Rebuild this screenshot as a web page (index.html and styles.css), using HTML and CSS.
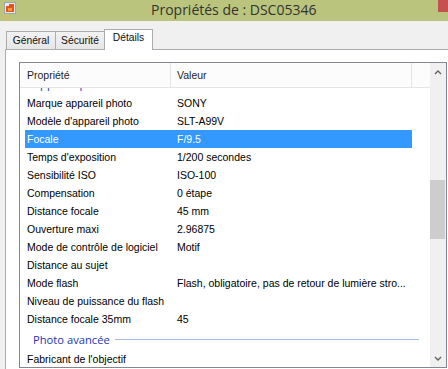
FILE: index.html
```html
<!DOCTYPE html>
<html lang="fr">
<head>
    <meta charset="UTF-8">
    <title>Propriétés de : DSC05346</title>
    <link rel="stylesheet" href="styles.css">
</head>
<body>
    <div class="titlebar">
        <svg class="app-icon" width="14" height="19" viewBox="0 0 14 19">
            <rect x="1.5" y="1.5" width="11" height="11" fill="#e4eaee" stroke="#9aa6b0"/>
            <path d="M3 5h3V3h5v8H3z" fill="#e5541b"/>
            <path d="M5 7h4v3H5z" fill="#f39a3c"/>
            <path d="M0.5 13.5q1.5 4 6 5" stroke="#f2b84a" stroke-width="1.2" fill="none"/>
        </svg>
        <div class="title">Propriétés de : DSC05346</div>
        <div class="close"></div>
    </div>

    <div class="tabs">
        <div class="tab tab-first">Général</div>
        <div class="tab">Sécurité</div>
        <div class="tab tab-active">Détails</div>
    </div>

    <div class="panel">
        <div class="listbox">
            <div class="list-main">
                <div class="list-header">
                    <div class="hcell hcell-name">Propriété</div>
                    <div class="hcell hcell-value">Valeur</div>
                </div>
                <div class="list-body">
                    <div class="list-content">
                        <div class="group"><span>Appareil photo</span><div class="group-line"></div></div>
                        <div class="row"><div class="cell-name">Marque appareil photo</div><div class="cell-value">SONY</div></div>
                        <div class="row"><div class="cell-name">Modèle d'appareil photo</div><div class="cell-value">SLT-A99V</div></div>
                        <div class="row row-selected"><div class="cell-name">Focale</div><div class="cell-value">F/9.5</div></div>
                        <div class="row"><div class="cell-name">Temps d'exposition</div><div class="cell-value">1/200 secondes</div></div>
                        <div class="row"><div class="cell-name">Sensibilité ISO</div><div class="cell-value">ISO-100</div></div>
                        <div class="row"><div class="cell-name">Compensation</div><div class="cell-value">0 étape</div></div>
                        <div class="row"><div class="cell-name">Distance focale</div><div class="cell-value">45 mm</div></div>
                        <div class="row"><div class="cell-name">Ouverture maxi</div><div class="cell-value">2.96875</div></div>
                        <div class="row"><div class="cell-name">Mode de contrôle de logiciel</div><div class="cell-value">Motif</div></div>
                        <div class="row"><div class="cell-name">Distance au sujet</div><div class="cell-value"></div></div>
                        <div class="row"><div class="cell-name">Mode flash</div><div class="cell-value">Flash, obligatoire, pas de retour de lumière stro...</div></div>
                        <div class="row"><div class="cell-name">Niveau de puissance du flash</div><div class="cell-value"></div></div>
                        <div class="row"><div class="cell-name">Distance focale 35mm</div><div class="cell-value">45</div></div>
                        <div class="group"><span>Photo avancée</span><div class="group-line"></div></div>
                        <div class="row"><div class="cell-name">Fabricant de l'objectif</div><div class="cell-value"></div></div>
                    </div>
                </div>
            </div>
            <div class="scrollbar">
                <div class="sb-button">
                    <svg width="8" height="6" viewBox="0 0 8 6"><polyline points="1,5 4,2 7,5" fill="none" stroke="#606060" stroke-width="1.3"/></svg>
                </div>
                <div class="sb-thumb"></div>
                <div class="sb-track"></div>
                <div class="sb-button">
                    <svg width="8" height="6" viewBox="0 0 8 6"><polyline points="1,1 4,4 7,1" fill="none" stroke="#606060" stroke-width="1.3"/></svg>
                </div>
            </div>
        </div>
    </div>
</body>
</html>
```

FILE: styles.css
```css
body {
    margin: 0;
    width: 448px;
    height: 369px;
    overflow: hidden;
    display: flex;
    flex-direction: column;
    background-color: #f0f0f0;
    font-family: "Liberation Sans", Arial, sans-serif;
    font-size: 10.5px;
    color: #000;
}

.titlebar {
    height: 21px;
    flex-shrink: 0;
    background-color: #bac47c;
    display: flex;
    align-items: flex-start;
}

.app-icon {
    margin: 1px 0 0 3px;
}

.title {
    margin-left: 134px;
    font-family: "Open Sans", sans-serif;
    font-size: 14px;
    line-height: 19px;
    color: #333;
}

.close {
    margin-left: auto;
    width: 10px;
    height: 12px;
    background-color: #c75050;
}

.tabs {
    height: 28px;
    flex-shrink: 0;
    display: flex;
    align-items: flex-end;
    padding-left: 6px;
}

.tab {
    height: 18px;
    box-sizing: border-box;
    width: 49px;
    border: 1px solid #acacac;
    border-left: none;
    border-bottom: none;
    background: linear-gradient(#f2f2f2, #e6e6e6);
    text-align: center;
    line-height: 17px;
    font-size: 10.3px;
    color: #111;
}

.tab-first {
    width: 50px;
    border-left: 1px solid #acacac;
}

.tab-active {
    position: relative;
    z-index: 1;
    height: 21px;
    margin-bottom: -1px;
    margin-left: -1px;
    border-left: 1px solid #acacac;
    background: #fff;
    line-height: 16px;
    width: 49px;
}

.panel {
    flex: 1;
    min-height: 0;
    overflow: hidden;
    margin-left: 5px;
    background-color: #fff;
    border-top: 1px solid #acacac;
    border-left: 1px solid #acacac;
    padding: 12px 0 0 13px;
}

.listbox {
    width: 428px;
    height: 306px;
    box-sizing: border-box;
    border: 1px solid #828790;
    display: flex;
}

.list-main {
    width: 410px;
    display: flex;
    flex-direction: column;
}

.list-header {
    height: 24px;
    flex-shrink: 0;
    display: flex;
    background-color: #fcfcfc;
    border-bottom: 1px solid #e5e5e5;
    line-height: 24px;
    color: #1e1e1e;
}

.hcell {
    box-sizing: border-box;
    border-right: 1px solid #e5e5e5;
}

.hcell-name {
    width: 151px;
    padding-left: 7px;
}

.hcell-value {
    width: 241px;
    padding-left: 6px;
}

.list-body {
    flex: 1;
    overflow: hidden;
}

.list-content {
    margin-top: -16px;
}

.row {
    margin-left: 5px;
    width: 387px;
    height: 18px;
    line-height: 18px;
    display: flex;
    white-space: nowrap;
}

.row-selected {
    background-color: #3399ff;
    color: #fff;
}

.cell-name {
    width: 145px;
    box-sizing: border-box;
    padding-left: 2px;
}

.cell-value {
    flex: 1;
    padding-left: 7px;
    overflow: hidden;
}

.group {
    margin-left: 5px;
    width: 394px;
    height: 22px;
    box-sizing: border-box;
    padding-left: 8px;
    display: flex;
    align-items: center;
    font-family: "Open Sans", sans-serif;
    font-size: 11.2px;
    color: #2236b0;
}

.group-line {
    flex: 1;
    height: 1px;
    margin-left: 5px;
    background-color: #a3bde3;
}

.scrollbar {
    width: 16px;
    background-color: #f0f0f0;
    display: flex;
    flex-direction: column;
}

.sb-button {
    height: 17px;
    display: flex;
    align-items: center;
    justify-content: center;
}

.sb-thumb {
    margin-top: 100px;
    height: 59px;
    width: 15px;
    background-color: #cdcdcd;
}

.sb-track {
    flex: 1;
}
```
